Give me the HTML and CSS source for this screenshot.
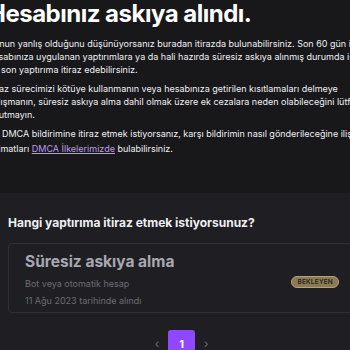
FILE: index.html
```html
<!DOCTYPE html>
<html lang="tr">
<head>
<meta charset="utf-8">
<link rel="stylesheet" href="styles.css">
</head>
<body>
<div class="page">
  <div class="intro">
    <h1 class="title">Hesabınız askıya alındı.</h1>
    <p class="text">Bunun yanlış olduğunu düşünüyorsanız buradan itirazda bulunabilirsiniz. Son 60 gün içinde hesabınıza uygulanan yaptırımlara ya da hali hazırda süresiz askıya alınmış durumda iseniz en son yaptırıma itiraz edebilirsiniz.</p>
    <p class="text">İtiraz sürecimizi kötüye kullanmanın veya hesabınıza getirilen kısıtlamaları delmeye çalışmanın, süresiz askıya alma dahil olmak üzere ek cezalara neden olabileceğini lütfen unutmayın.</p>
    <p class="text text-last">Bir DMCA bildirimine itiraz etmek istiyorsanız, karşı bildirimin nasıl gönderileceğine ilişkin talimatları <a class="link" href="#">DMCA İlkelerimizde</a> bulabilirsiniz.</p>
  </div>
  <div class="lower">
    <h2 class="question">Hangi yaptırıma itiraz etmek istiyorsunuz?</h2>
    <div class="card">
      <div class="card-info">
        <div class="card-title">Süresiz askıya alma</div>
        <div class="card-sub card-sub-first">Bot veya otomatik hesap</div>
        <div class="card-sub">11 Ağu 2023 tarihinde alındı</div>
      </div>
      <span class="badge">BEKLEYEN</span>
    </div>
    <div class="pager">
      <span class="arrow">&#8249;</span>
      <span class="page-btn">1</span>
      <span class="arrow">&#8250;</span>
    </div>
  </div>
</div>
</body>
</html>
```
FILE: styles.css
```css
html, body {
  margin: 0;
  padding: 0;
  width: 350px;
  height: 350px;
  overflow: hidden;
  background: #18181b;
}
body {
  font-family: Inter, "Noto Sans", sans-serif;
  color: #efeff1;
}
.page {
  width: 350px;
  height: 350px;
  overflow: hidden;
  display: flex;
  flex-direction: column;
}
.intro {
  margin-left: -12px;
  width: 387px;
  flex: none;
  padding-bottom: 35px;
}
.title {
  margin: -2px 0 0 0;
  font-size: 24px;
  line-height: 32px;
  font-weight: 700;
  color: #ffffff;
  letter-spacing: -0.5px;
  white-space: nowrap;
}
.text {
  margin: 7px 0 0 0;
  font-size: 9px;
  line-height: 13px;
  color: #efeff1;
}
.text + .text {
  margin-top: 6px;
}
.text-last {
  margin-top: 5px;
}
.link {
  display: inline-block;
  line-height: 18px;
  color: #bf94ff;
  text-decoration: underline;
}
.lower {
  flex: 1;
  background: #1f1f23;
  padding: 22px 0 0 8px;
}
.question {
  margin: 0;
  font-size: 12px;
  line-height: 16px;
  font-weight: 700;
  color: #efeff1;
}
.card {
  margin-top: 12px;
  width: 346px;
  height: 70px;
  box-sizing: border-box;
  border: 1px solid #2f2f35;
  border-radius: 4px;
  padding: 8px 14px 0 16px;
  display: flex;
  align-items: center;
  justify-content: space-between;
}
.card-info {
  align-self: flex-start;
}
.card-title {
  font-size: 15.5px;
  line-height: 20px;
  font-weight: 700;
  color: #a8a8b0;
}
.card-sub {
  font-size: 9px;
  line-height: 17px;
  color: #6b6b72;
}
.card-sub-first {
  margin-top: 3px;
}
.badge {
  background: #8a7a55;
  border: 1px solid #b3a27a;
  border-radius: 8px;
  color: #2a2418;
  font-size: 6.5px;
  font-weight: 600;
  line-height: 10px;
  padding: 0 5px;
  letter-spacing: 0.2px;
}
.pager {
  margin-top: 17px;
  display: flex;
  justify-content: center;
  align-items: center;
  gap: 6px;
  padding-left: 5px;
}
.arrow {
  font-size: 12px;
  color: #6b6b72;
  width: 10px;
  text-align: center;
}
.page-btn {
  width: 27px;
  height: 27px;
  background: #9147ff;
  border-radius: 3px;
  color: #ffffff;
  font-size: 11px;
  font-weight: 700;
  display: flex;
  align-items: center;
  justify-content: center;
}
```
